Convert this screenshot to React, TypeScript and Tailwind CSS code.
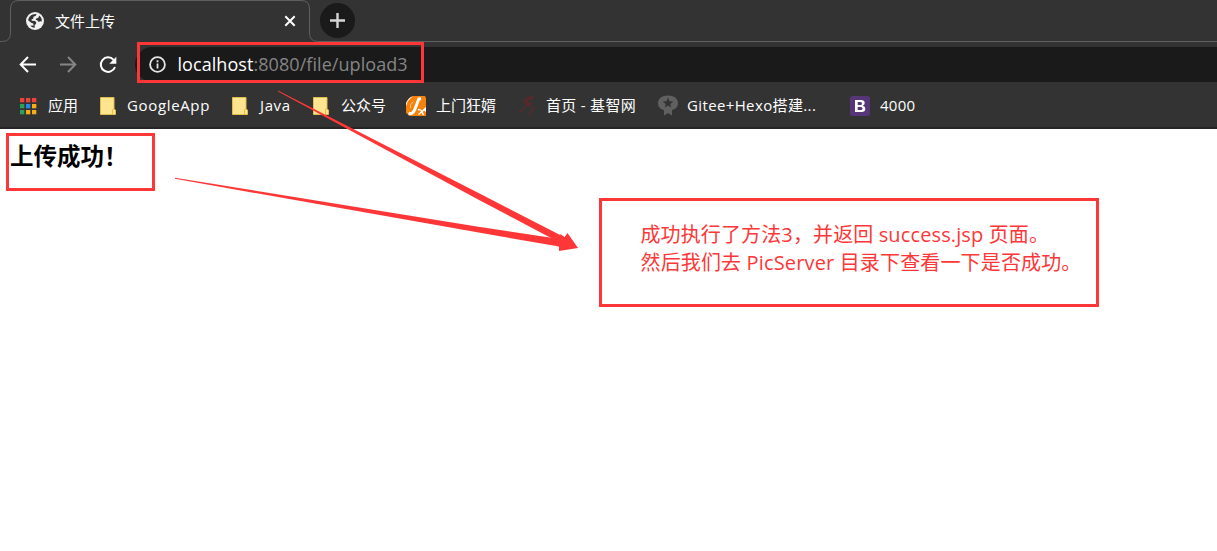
import React from "react";

const sans = "font-['Open_Sans','Noto_Sans_CJK_SC',sans-serif]";

function Globe() {
  return (
    <svg className="block h-[18px] w-[18px] shrink-0" viewBox="0 0 18 18">
      <circle cx="9" cy="9" r="9" fill="#f1f1f1" />
      <path d="M10.5 2.1 9.8 3.8 7.4 4.8 7.2 6.8 5.4 7.4 5.8 8.8 9 9 10.2 10.2 10 12 8.6 13 8.8 15.8 C7.2 15.8 5.4 15 4.2 13.8 L7.6 13.4 7.2 11.4 5.2 10.8 2.2 8.2 C2.6 4.6 6 1.6 10.5 2.1Z" fill="#333" />
      <path d="M13.2 3.6 C15 5 16 7 15.8 9.4 L14.2 9.2 12.8 10 11.4 8.4 9.6 7.6 10.4 6.4 12.4 5.8Z" fill="#333" />
    </svg>
  );
}

function TabEdge() {
  return (
    <svg className="absolute left-0 top-0 h-[43px] w-[360px]" viewBox="0 0 360 43" fill="none">
      <path d="M0 41.5H2Q10.5 41.5 10.5 33V9Q10.5 .5 19 .5H301Q309.5 .5 309.5 9V33Q309.5 41.5 318 41.5H360" stroke="#5f5f5f" />
    </svg>
  );
}

function Apps() {
  const colors = ["#ee4338", "#ee4338", "#ee4338", "#2ba25b", "#2688ee", "#f8ac15", "#2ba25b", "#f8ac15", "#f8ac15"];
  return (
    <svg className="block h-[18px] w-[18px]" viewBox="0 0 18 18">
      {colors.map((c, i) => (
        <rect key={i} x={1 + (i % 3) * 6} y={1 + Math.floor(i / 3) * 6} width="4.3" height="4.3" fill={c} />
      ))}
    </svg>
  );
}

function Folder() {
  return (
    <svg className="block h-[20px] w-[18px]" viewBox="0 0 18 20">
      <path d="M1.5 1.5H15V13L16.5 14V18.5H1.5Z" fill="#ffe58f" stroke="#e2bd4d" />
      <path d="M13.5 18.5V13.5L15 12.8" stroke="#e2bd4d" fill="none" />
    </svg>
  );
}

function OrangeMark() {
  return (
    <svg className="block h-[20px] w-[20px]" viewBox="0 0 20 20">
      <path d="M7 0H19L20 2V20H4L0 17V8Q2 2 7 0Z" fill="#f5820a" />
      <path d="M7 0 2 5 0 10V7Q2 2 7 0ZM20 11V16L17 13.5Z" fill="#fff" />
      <path d="M15 2.5 12.8 3 8.6 14Q7 18 2.5 17.7" stroke="#fff" strokeWidth="3" fill="none" />
      <path d="M12 13.8Q15 13 16 16L17.5 19M19 13 12.5 18.5" stroke="#fff" strokeWidth="1.4" fill="none" />
      <path d="M7.5 5.5Q3 9 4.5 12" stroke="#ffc078" fill="none" />
    </svg>
  );
}

function RedMark() {
  return (
    <svg className="block h-[20px] w-[18px]" viewBox="0 0 18 20" fill="none" stroke="#7c2022">
      <path d="M16 .8Q8 1 5.5 5Q6 7 11 9Q17 12 14 15L10 19M15 3Q9 3 8 5Q10 7 14 8M.5 15.5Q7 14 8.5 8" strokeWidth=".9" />
    </svg>
  );
}

function Award() {
  return (
    <svg className="block h-[21px] w-[20px]" viewBox="0 0 20 21">
      <path d="M10 .5C16 .5 20 3.6 20 8.2C20 12 17.5 14 14 15V20.5L10 18 6 20.5V15C2.5 14 0 12 0 8.2C0 3.6 4 .5 10 .5Z" fill="#606060" />
      <path d="m10 2.6 1.4 3.6 3.9.2-3 2.5 1 3.7-3.3-2.1-3.3 2.1 1-3.7-3-2.5 3.9-.2Z" fill="#333" />
    </svg>
  );
}

function Boot() {
  return (
    <svg className="block h-[20px] w-[20px]" viewBox="0 0 20 20">
      <rect width="20" height="20" rx="2.5" fill="#563579" />
      <path fillRule="evenodd" d="M5 4H11.2Q14.7 4 14.7 7Q14.7 9 12.7 9.7Q15.3 10.3 15.3 12.7Q15.3 16 11.5 16H5ZM7.7 6V9H10.5Q12 9 12 7.5Q12 6 10.5 6ZM7.7 11V14H11Q12.5 14 12.5 12.5Q12.5 11 11 11Z" fill="#fff" />
    </svg>
  );
}

function Bookmark({ icon, label, className, textClass }: { icon: React.ReactNode; label: string; className: string; textClass: string }) {
  return (
    <div className={`flex h-full shrink-0 items-center ${className}`}>
      {icon}
      <span className={`whitespace-nowrap pb-[2px] ${textClass}`}>{label}</span>
    </div>
  );
}

export default function App() {
  return (
    <div className={`relative flex h-[551px] w-full flex-col overflow-hidden bg-white ${sans}`}>
      <header className="flex h-[129px] shrink-0 flex-col border-b-2 border-[#252525] bg-[#333] text-white">
        <div className="relative flex h-[42px] shrink-0 items-center">
          <div className="h-full w-[320px] shrink-0" />
          <div className="h-full grow border-b border-[#5f5f5f]" />
          <TabEdge />
          <div className="absolute left-[26px] top-0 flex h-[42px] w-[270px] items-center">
            <Globe />
            <span className="ml-[11px] text-[15px] leading-5">文件上传</span>
            <svg className="ml-auto h-3 w-3" viewBox="0 0 12 12"><path d="m1.3 1.3 9.4 9.4m0-9.4-9.4 9.4" stroke="#fff" strokeWidth="2" /></svg>
          </div>
          <div className="absolute left-[320px] top-[3px] flex size-[35px] items-center justify-center rounded-full bg-[#1a1a1a]">
            <svg className="h-[15px] w-[15px]" viewBox="0 0 15 15"><path d="M7.5 0v15M0 7.5h15" stroke="#d6d6d6" strokeWidth="2.4" /></svg>
          </div>
        </div>
        <div className="flex h-[45px] shrink-0 items-center pl-[19px]">
          <svg className="h-[18px] w-[18px]" viewBox="0 0 18 18" fill="none" stroke="#fff" strokeWidth="2"><path d="M17 8.5H2M9 1 1.7 8.5 9 16" /></svg>
          <svg className="ml-[22px] h-[18px] w-[18px]" viewBox="0 0 18 18" fill="none" stroke="#858585" strokeWidth="2"><path d="M1 8.5H16M9 1 16.3 8.5 9 16" /></svg>
          <svg className="ml-[22px] h-[18px] w-[18px]" viewBox="0 0 18 18"><path d="M14.6 3.8A7.3 7.3 0 1 0 16 11" fill="none" stroke="#fff" strokeWidth="2" /><path d="M17.3.8V7.8H10.3Z" fill="#fff" /></svg>
          <div className="ml-[18px] flex h-[35px] grow items-center rounded-l-full bg-[#1a1a1a] pl-[14px]">
            <svg className="h-[17px] w-[17px] shrink-0" viewBox="0 0 17 17"><circle cx="8.5" cy="8.5" r="7.4" fill="none" stroke="#e5e5e5" strokeWidth="1.8" /><path d="M8.5 7.5v5M8.5 4.2v2" stroke="#e5e5e5" strokeWidth="1.8" /></svg>
            <span className="ml-[11.5px] whitespace-nowrap pb-[2px] text-[18px] leading-6 tracking-[0.06px] text-[#858585]"><span className="text-white">localhost</span>:8080/file/upload3</span>
          </div>
        </div>
        <nav className="flex h-[37px] shrink-0 items-center text-[15px] leading-5">
          <Bookmark icon={<Apps />} label="应用" className="ml-[19px] w-[80px]" textClass="ml-[11px]" />
          <Bookmark icon={<Folder />} label="GoogleApp" className="w-[132px]" textClass="ml-[10px] tracking-[0.65px]" />
          <Bookmark icon={<Folder />} label="Java" className="w-[81px]" textClass="ml-[11px] tracking-[0.6px]" />
          <Bookmark icon={<Folder />} label="公众号" className="w-[94px]" textClass="ml-[11px]" />
          <Bookmark icon={<OrangeMark />} label="上门狂婿" className="w-[112px]" textClass="ml-[10px]" />
          <Bookmark icon={<RedMark />} label="首页 - 基智网" className="w-[140px]" textClass="ml-[10px] tracking-[0.3px]" />
          <Bookmark icon={<Award />} label="Gitee+Hexo搭建..." className="w-[192px]" textClass="ml-[9px] tracking-[0.37px]" />
          <Bookmark icon={<Boot />} label="4000" className="w-[80px]" textClass="ml-[10px] tracking-[0.25px]" />
        </nav>
      </header>
      <main className="pl-[10px] pt-[11px]">
        <h1 className="whitespace-nowrap text-[23.5px] font-bold leading-8 text-black">上传成功！</h1>
      </main>
      <div className="absolute left-[137px] top-[42px] h-[41px] w-[287px] border-3 border-[#fd3737]" />
      <div className="absolute left-[6px] top-[133px] h-[58px] w-[149px] border-3 border-[#fd3737]" />
      <svg className="absolute left-0 top-0 h-[320px] w-[600px]" viewBox="0 0 600 320" fill="#fd3737">
        <path d="M278 90.6 480 193.7 564.5 237.3 567.5 233 578 248 559.5 247.5 552 238.5 480 200.5 278 91.6Z" />
        <path d="M175 177.8 480 227 559.6 239 560.5 234 578 248 559 251 559 246.5 480 232.8 175 178.8Z" />
      </svg>
      <div className="absolute left-[599px] top-[198px] h-[109px] w-[500px] border-3 border-[#fd3737] pl-[38.5px] pt-[20px] text-[20px] leading-[28px] text-[#fd3737]">
        <p className="whitespace-nowrap tracking-[0.12px]">成功执行了方法3，并返回 success.jsp 页面。</p>
        <p className="whitespace-nowrap tracking-[0.15px]">然后我们去 PicServer 目录下查看一下是否成功。</p>
      </div>
    </div>
  );
}
